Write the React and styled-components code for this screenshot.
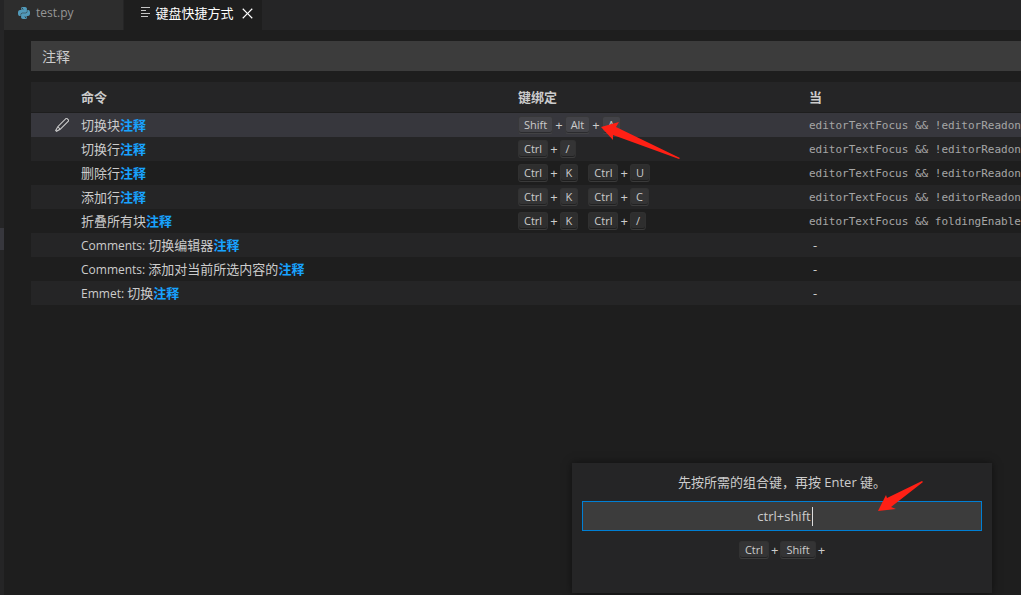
import styled, { createGlobalStyle } from "styled-components";
import { useState, Fragment } from "react";
import { SiPython } from "react-icons/si";
import { VscClose, VscEdit } from "react-icons/vsc";

const GlobalStyle = createGlobalStyle`
    * {
        box-sizing: border-box;
    }

    body {
        margin: 0;
        background: #1e1e1e;
        color: #cccccc;
        font-family: "Open Sans", "Noto Sans CJK SC", sans-serif;
        font-size: 13px;
        overflow: hidden;
    }

    button, input {
        font: inherit;
        color: inherit;
        border: 0;
        background: none;
        padding: 0;
    }
`

const Window = styled.div`
    position: relative;
    display: flex;
    min-height: 100vh;
`

const Sidebar = styled.aside`
    flex: 0 0 4px;
    padding-top: 228px;
    background: #252526;
`

const SidebarItem = styled.div`
    height: 22px;
    background: #37373d;
`

const Editor = styled.main`
    flex: 1;
    min-width: 0;
`

const TabBar = styled.nav`
    display: flex;
    height: 30px;
    gap: 1px;
    background: #252526;
`

const Tab = styled.div`
    display: flex;
    align-items: center;
    gap: 4px;
    height: 30px;
    padding: 0 5px 4px ${props => props.$active ? 16 : 14}px;
    background: ${props => props.$active ? '#1e1e1e' : '#2d2d2d'};
    color: ${props => props.$active ? '#ffffff' : '#969696'};
`

const TabButton = styled.button`
    display: flex;
    align-items: center;
    gap: 6px;
    line-height: 20px;
    padding-right: ${props => props.$space || 0}px;
`

const Latin = styled.span`
    font-size: 12px;
`

const CloseButton = styled.button`
    display: flex;
    font-size: 19px;
`

const Content = styled.section`
    padding: 11px 0 0 27px;
`

const SearchInput = styled.input`
    display: block;
    width: 100%;
    height: 30px;
    padding: 0 11px;
    background: #3c3c3c;
    font-size: 14px;
    outline: none;
`

const Table = styled.table`
    width: 100%;
    margin-top: 11px;
    table-layout: fixed;
    border-spacing: 0;
`

const ActionCol = styled.col`
    width: 50px;
`

const CommandCol = styled.col`
    width: 437px;
`

const KeyCol = styled.col`
    width: 291px;
`

const HeadRow = styled.tr`
    height: 31px;
    background: #252526;
`

const HeadCell = styled.th`
    padding: 0 0 1px;
    border-bottom: 1px solid #1e1e1e;
    text-align: left;
    font-weight: 700;
`

const Row = styled.tr`
    height: 24px;
    background: ${props => props.$selected ? '#37373d' : 'transparent'};

    &:nth-child(even) {
        background: #252526;
    }
`

const Cell = styled.td`
    padding: 0;
    line-height: 20px;
    white-space: nowrap;
    overflow: hidden;
`

const EditButton = styled.button`
    display: flex;
    margin-left: 23px;
    font-size: 16px;
`

const Highlight = styled.span`
    color: #18a3ff;
    font-weight: 700;
`

const When = styled.code`
    font-family: "DejaVu Sans Mono", monospace;
    font-size: 11px;
    color: #a6a6a6;
`

const NoWhen = styled.span`
    padding-left: 4px;
`

const KeyList = styled.div`
    display: flex;
    align-items: center;
    justify-content: ${props => props.$center ? 'center' : 'flex-start'};
    gap: 10px;
`

const Chord = styled.span`
    display: flex;
    align-items: center;
    gap: 2px;
    line-height: 18px;
`

const Key = styled.kbd`
    height: 18px;
    padding: 0 5px;
    border: 1px solid rgba(51, 51, 51, 0.6);
    border-bottom-color: rgba(68, 68, 68, 0.6);
    border-radius: 3px;
    background: rgba(128, 128, 128, 0.17);
    box-shadow: inset 0 -1px 0 rgba(0, 0, 0, 0.36);
    font-family: inherit;
    font-size: 11px;
    line-height: 15px;
`

const Dialog = styled.div`
    position: absolute;
    right: 29px;
    bottom: 2px;
    width: 420px;
    height: 130px;
    padding: 9px 10px;
    background: #252526;
    box-shadow: 0 0 8px rgba(0, 0, 0, 0.5);
    text-align: center;
`

const Message = styled.label`
    display: block;
    margin-bottom: 9px;
    line-height: 20px;
`

const KeyInput = styled.div`
    position: relative;
    margin-bottom: 10px;

    input {
        display: block;
        width: 100%;
        height: 30px;
        padding-left: 4px;
        border: 1px solid #007fd4;
        background: #3c3c3c;
        text-align: center;
        font-size: 13px;
        outline: none;
    }
`

const Caret = styled.span`
    position: absolute;
    top: 6px;
    left: calc(50% + 30px);
    width: 1px;
    height: 19px;
    background: #dddddd;
`

const Arrow = styled.svg`
    position: absolute;
    fill: #ff2015;
    pointer-events: none;
`

const TableArrow = styled(Arrow)`
    left: 601px;
    top: 122px;
`

const DialogArrow = styled(Arrow)`
    right: 68px;
    top: 18px;
`

const notReadonly = 'editorTextFocus && !editorReadonly'

const commands = [
    { name: '切换块', keys: [['Shift', 'Alt', 'A']], when: notReadonly },
    { name: '切换行', keys: [['Ctrl', '/']], when: notReadonly },
    { name: '删除行', keys: [['Ctrl', 'K'], ['Ctrl', 'U']], when: notReadonly },
    { name: '添加行', keys: [['Ctrl', 'K'], ['Ctrl', 'C']], when: notReadonly },
    { name: '折叠所有块', keys: [['Ctrl', 'K'], ['Ctrl', '/']], when: 'editorTextFocus && foldingEnabled' },
    { category: 'Comments: ', name: '切换编辑器', keys: [] },
    { category: 'Comments: ', name: '添加对当前所选内容的', keys: [] },
    { category: 'Emmet: ', name: '切换', keys: [] },
]

const Keybinding = ({ chords, center, pending }) => (
    <KeyList $center={center}>
        {chords.map((chord, i) => (
            <Chord key={i}>
                {chord.map((key, j) => (
                    <Fragment key={key}>
                        {j > 0 && <span>+</span>}
                        <Key>{key}</Key>
                    </Fragment>
                ))}
                {pending && <span>+</span>}
            </Chord>
        ))}
    </KeyList>
)

const ListIcon = () => (
    <svg width="10" height="12" viewBox="0 0 10 12" fill="#c5c5c5">
        <path d="M1 0h9v1H1zM1 3h5v1H1zM1 6h9v1H1zM1 9h7v1H1z" />
    </svg>
)

export const App = () => {
    const [search, setSearch] = useState('注释')
    const [keys, setKeys] = useState('ctrl+shift')

    return (
        <>
            <GlobalStyle />
            <Window>
                <Sidebar>
                    <SidebarItem />
                </Sidebar>
                <Editor>
                    <TabBar>
                        <Tab>
                            <TabButton $space={44}>
                                <SiPython size={12} color="#519aba" />
                                <Latin>test.py</Latin>
                            </TabButton>
                        </Tab>
                        <Tab $active>
                            <TabButton>
                                <ListIcon />
                                键盘快捷方式
                            </TabButton>
                            <CloseButton aria-label="关闭"><VscClose /></CloseButton>
                        </Tab>
                    </TabBar>
                    <Content>
                        <SearchInput
                            aria-label="搜索"
                            value={search}
                            onChange={(e) => setSearch(e.target.value)}
                        />
                        <Table>
                            <colgroup>
                                <ActionCol />
                                <CommandCol />
                                <KeyCol />
                                <col />
                            </colgroup>
                            <thead>
                                <HeadRow>
                                    <HeadCell />
                                    <HeadCell>命令</HeadCell>
                                    <HeadCell>键绑定</HeadCell>
                                    <HeadCell>当</HeadCell>
                                </HeadRow>
                            </thead>
                            <tbody>
                                {commands.map((command, i) => (
                                    <Row key={i} $selected={i === 0}>
                                        <Cell>
                                            {i === 0 && <EditButton aria-label="编辑"><VscEdit /></EditButton>}
                                        </Cell>
                                        <Cell>
                                            {command.category && <Latin>{command.category}</Latin>}
                                            {command.name}
                                            <Highlight>注释</Highlight>
                                        </Cell>
                                        <Cell><Keybinding chords={command.keys} /></Cell>
                                        <Cell>
                                            {command.when ? <When>{command.when}</When> : <NoWhen>-</NoWhen>}
                                        </Cell>
                                    </Row>
                                ))}
                            </tbody>
                        </Table>
                    </Content>
                </Editor>
                <TableArrow width="80" height="38" viewBox="0 0 80 38">
                    <path d="M0 5L18 0L15 5L79 36L78 37L12 13L12 18Z" />
                </TableArrow>
                <Dialog>
                    <Message htmlFor="keys">先按所需的组合键，再按 Enter 键。</Message>
                    <KeyInput>
                        <input id="keys" value={keys} onChange={(e) => setKeys(e.target.value)} />
                        <Caret />
                    </KeyInput>
                    <Keybinding chords={[['Ctrl', 'Shift']]} center pending />
                    <DialogArrow width="46" height="31" viewBox="0 0 46 31">
                        <path d="M0 30L8 14L9 17L44 0L45 1L13 26L18 28Z" />
                    </DialogArrow>
                </Dialog>
            </Window>
        </>
    )
}

export default App;
